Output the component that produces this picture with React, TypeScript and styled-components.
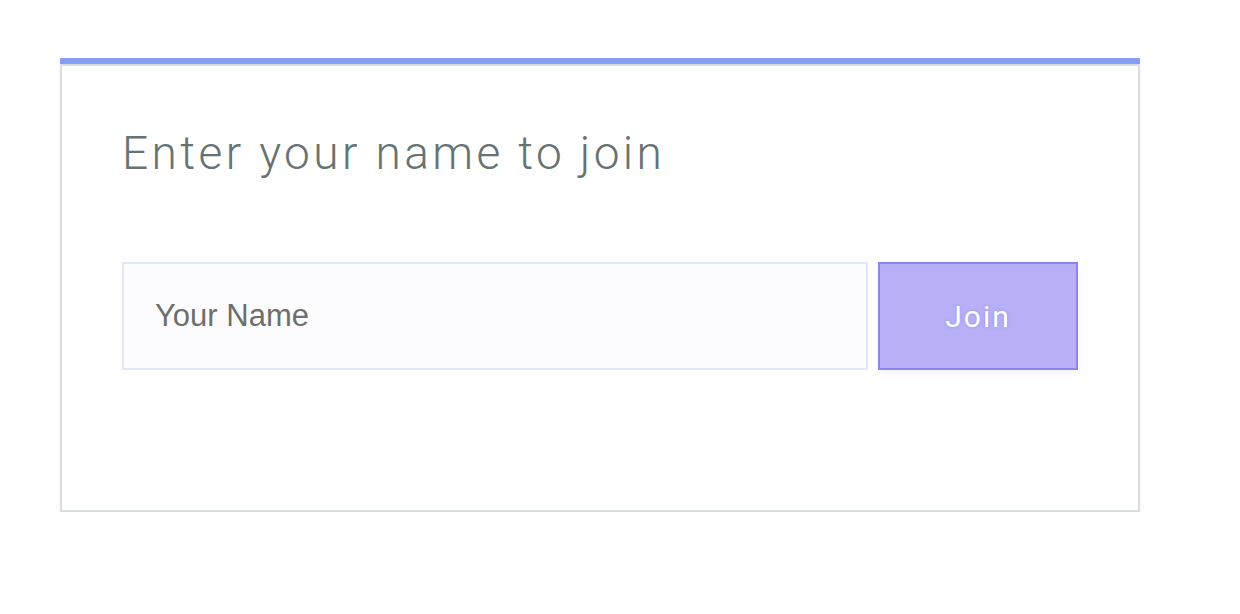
import * as React from 'react'
import styled, { createGlobalStyle } from 'styled-components'

const GlobalStyle = createGlobalStyle`
  html, body {
    margin: 0;
    padding: 0;
    background: #ffffff;
  }
`

const Page = styled.div`
  padding: 64px 60px 0;
  font-family: "Liberation Sans", Arial, sans-serif;
`

const Card = styled.div`
  width: 1080px;
  box-sizing: border-box;
  padding: 64px 60px 140px;
  background: #ffffff;
  border: 2px solid #d7dede;
  box-shadow: 0 -6px 0 #86a0f8, 0 3px 8px rgba(0, 0, 0, 0.04);
`

const Heading = styled.h1`
  margin: 0 0 86px;
  font-family: Roboto, "Liberation Sans", sans-serif;
  font-weight: 300;
  font-size: 46px;
  line-height: 46px;
  letter-spacing: 3.4px;
  color: #677272;
`

const Form = styled.form`
  display: flex;
  gap: 10px;
`

const NameInput = styled.input`
  flex: 1;
  height: 108px;
  box-sizing: border-box;
  padding: 0 31px;
  border: 2px solid #dfe7f9;
  background: #fcfcfe;
  font-family: "Liberation Sans", Arial, sans-serif;
  font-size: 31px;
  color: #6e6e6e;
  outline: none;

  &::placeholder {
    color: #6e6e6e;
  }
`

const JoinButton = styled.button`
  width: 200px;
  height: 108px;
  box-sizing: border-box;
  border: 2px solid #8d84f4;
  background: #b7b0f6;
  color: #ffffff;
  font-family: Roboto, "Liberation Sans", sans-serif;
  font-weight: 400;
  font-size: 30px;
  letter-spacing: 2px;
  text-shadow: 0 0 3px rgba(120, 110, 230, 0.5);
  box-shadow: 0 3px 8px rgba(0, 0, 0, 0.05);
  cursor: pointer;
`

export default class App extends React.Component {
  render(): JSX.Element {
    return (
      <Page>
        <GlobalStyle />
        <Card>
          <Heading>Enter your name to join</Heading>
          <Form onSubmit={(e) => e.preventDefault()}>
            <NameInput placeholder="Your Name" />
            <JoinButton type="submit">Join</JoinButton>
          </Form>
        </Card>
      </Page>
    )
  }
}
